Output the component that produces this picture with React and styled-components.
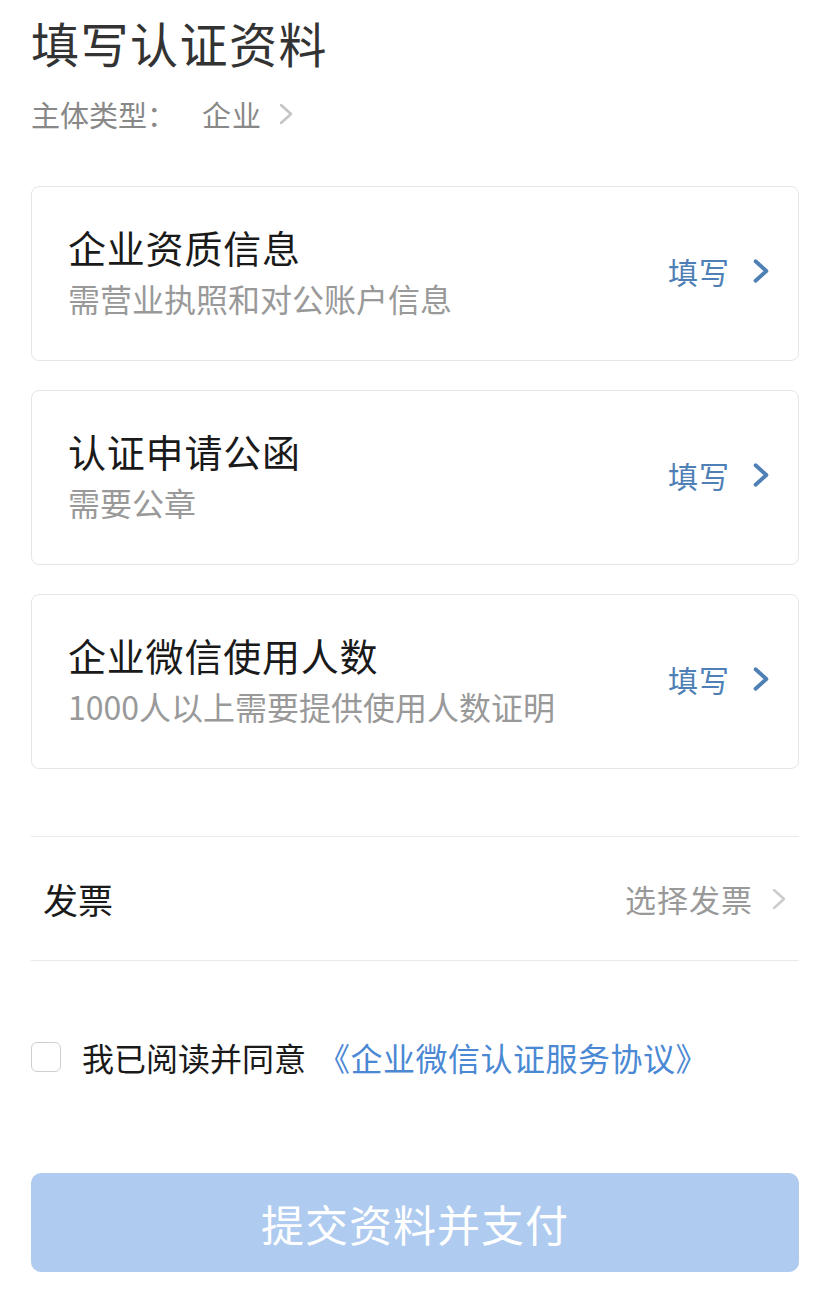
import styled, { createGlobalStyle } from "styled-components";

const GlobalStyle = createGlobalStyle`
  body {
    margin: 0;
    background: #ffffff;
    font-family: "Noto Sans CJK SC", "Noto Sans", sans-serif;
  }
`;

const Page = styled.div`
  padding: 12px 35px 0 31px;
  width: 834px;
  box-sizing: border-box;
`;

const Title = styled.h1`
  margin: 0;
  font-size: 48px;
  line-height: 60px;
  font-weight: 400;
  color: #333333;
  letter-spacing: 1.5px;
`;

const SubjectRow = styled.div`
  display: flex;
  align-items: center;
  margin-top: 22px;
  font-size: 29px;
  line-height: 40px;
  color: #888888;
  gap: 16px;
`;

const SubjectValue = styled.span`
  margin-left: 10px;
  letter-spacing: 1px;
`;

const CardList = styled.div`
  display: flex;
  flex-direction: column;
  gap: 29px;
  margin-top: 52px;
`;

const Card = styled.div`
  display: flex;
  align-items: center;
  justify-content: space-between;
  height: 175px;
  box-sizing: border-box;
  padding: 0 28px 6px 36px;
  border: 1px solid #e6e6e6;
  border-radius: 8px;
`;

const CardText = styled.div`
  display: flex;
  flex-direction: column;
  gap: 5px;
`;

const CardTitle = styled.div`
  font-size: 38px;
  line-height: 50px;
  color: #1a1a1a;
  letter-spacing: 0.8px;
`;

const CardDesc = styled.div`
  font-size: 32px;
  line-height: 42px;
  color: #999999;
`;

const FillAction = styled.div`
  display: flex;
  align-items: center;
  gap: 22px;
  font-size: 30px;
  color: #4e7fb5;
  letter-spacing: 1px;
`;

const InvoiceRow = styled.div`
  display: flex;
  align-items: center;
  justify-content: space-between;
  height: 123px;
  margin-top: 67px;
  padding: 0 12px;
  border-top: 1px solid #e9e9e9;
  border-bottom: 1px solid #e9e9e9;
`;

const InvoiceLabel = styled.div`
  font-size: 35px;
  color: #1a1a1a;
`;

const InvoicePick = styled.div`
  display: flex;
  align-items: center;
  gap: 18px;
  font-size: 31px;
  color: #999999;
  letter-spacing: 1px;
`;

const AgreeRow = styled.label`
  display: flex;
  align-items: center;
  margin-top: 73px;
  font-size: 32px;
  color: #1a1a1a;
`;

const CheckBox = styled.span`
  width: 28px;
  height: 28px;
  border: 1.5px solid #cfcfcf;
  border-radius: 6px;
  margin-right: 21px;
`;

const AgreeLink = styled.span`
  color: #4a88d4;
  margin-left: 12px;
  letter-spacing: 0.5px;
`;

const SubmitButton = styled.button`
  display: block;
  width: 100%;
  height: 99px;
  margin-top: 93px;
  border: none;
  border-radius: 10px;
  background: #afcbef;
  color: #ffffff;
  font-family: inherit;
  font-size: 43px;
  letter-spacing: 1px;
`;

const Chevron = ({ color, width = 16, height = 24, stroke = 3 }) => (
  <svg width={width} height={height} viewBox="0 0 16 24" fill="none">
    <polyline
      points="3,3 13,12 3,21"
      stroke={color}
      strokeWidth={stroke}
      strokeLinecap="round"
      strokeLinejoin="round"
    />
  </svg>
);

const cards = [
  { title: "企业资质信息", desc: "需营业执照和对公账户信息" },
  { title: "认证申请公函", desc: "需要公章" },
  { title: "企业微信使用人数", desc: "1000人以上需要提供使用人数证明" },
];

export default function App() {
  return (
    <>
      <GlobalStyle />
      <Page>
        <Title>填写认证资料</Title>
        <SubjectRow>
          <span>主体类型：</span>
          <SubjectValue>企业</SubjectValue>
          <Chevron color="#c4c4c4" width={16} height={24} stroke={2.5} />
        </SubjectRow>

        <CardList>
          {cards.map((c) => (
            <Card key={c.title}>
              <CardText>
                <CardTitle>{c.title}</CardTitle>
                <CardDesc>{c.desc}</CardDesc>
              </CardText>
              <FillAction>
                <span>填写</span>
                <Chevron color="#4e7fb5" width={18} height={26} stroke={3.5} />
              </FillAction>
            </Card>
          ))}
        </CardList>

        <InvoiceRow>
          <InvoiceLabel>发票</InvoiceLabel>
          <InvoicePick>
            <span>选择发票</span>
            <Chevron color="#cccccc" width={16} height={26} stroke={2.5} />
          </InvoicePick>
        </InvoiceRow>

        <AgreeRow>
          <CheckBox />
          <span>我已阅读并同意</span>
          <AgreeLink>《企业微信认证服务协议》</AgreeLink>
        </AgreeRow>

        <SubmitButton>提交资料并支付</SubmitButton>
      </Page>
    </>
  );
}
